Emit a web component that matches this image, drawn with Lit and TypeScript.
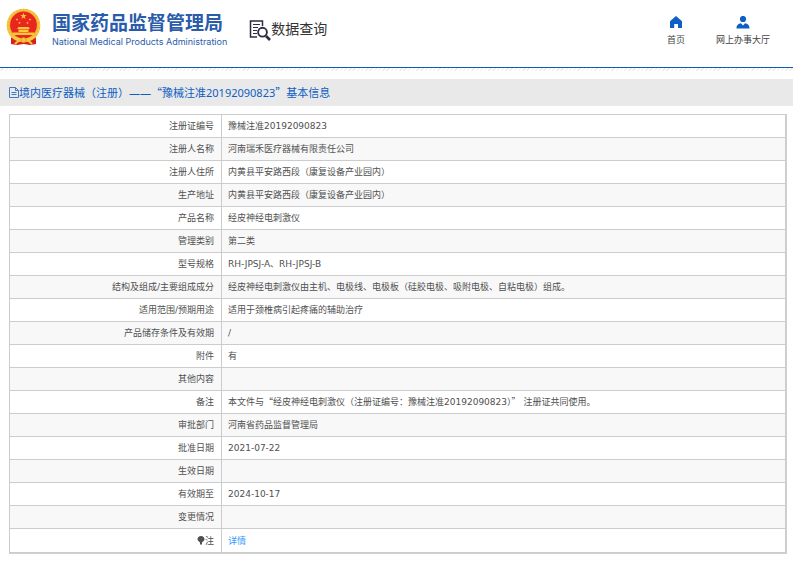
import { LitElement, html, css, svg, nothing } from "lit";
import { customElement } from "lit/decorators.js";

interface Row {
  label: string;
  value: string;
  link?: boolean;
}

const ROWS: Row[] = [
  { label: "注册证编号", value: "豫械注准20192090823" },
  { label: "注册人名称", value: "河南瑞禾医疗器械有限责任公司" },
  { label: "注册人住所", value: "内黄县平安路西段（康复设备产业园内）" },
  { label: "生产地址", value: "内黄县平安路西段（康复设备产业园内）" },
  { label: "产品名称", value: "经皮神经电刺激仪" },
  { label: "管理类别", value: "第二类" },
  { label: "型号规格", value: "RH-JPSJ-A、RH-JPSJ-B" },
  {
    label: "结构及组成/主要组成成分",
    value: "经皮神经电刺激仪由主机、电极线、电极板（硅胶电极、吸附电极、自粘电极）组成。",
  },
  { label: "适用范围/预期用途", value: "适用于颈椎病引起疼痛的辅助治疗" },
  { label: "产品储存条件及有效期", value: "/" },
  { label: "附件", value: "有" },
  { label: "其他内容", value: "" },
  {
    label: "备注",
    value: "本文件与“经皮神经电刺激仪（注册证编号：豫械注准20192090823）” 注册证共同使用。",
  },
  { label: "审批部门", value: "河南省药品监督管理局" },
  { label: "批准日期", value: "2021-07-22" },
  { label: "生效日期", value: "" },
  { label: "有效期至", value: "2024-10-17" },
  { label: "变更情况", value: "" },
  { label: "注", value: "详情", link: true },
];

// Chinese quotation marks take the full-width glyphs of the CJK face.
const withQuotes = (text: string) =>
  text
    .split(/([“”])/)
    .map((part) => (/[“”]/.test(part) ? html`<span class="quote">${part}</span>` : part));

const star = (cx: number, cy: number, r: number) => {
  const pts = Array.from({ length: 10 }, (_, i) => {
    const a = (Math.PI / 5) * i - Math.PI / 2;
    const d = i % 2 ? r * 0.4 : r;
    return `${(cx + d * Math.cos(a)).toFixed(2)},${(cy + d * Math.sin(a)).toFixed(2)}`;
  }).join(" ");
  return svg`<polygon points=${pts} fill="#ffc83a"/>`;
};

@customElement("site-header")
export class SiteHeader extends LitElement {
  static styles = css`
    :host {
      display: block;
    }
    .bar {
      display: flex;
      align-items: flex-start;
      height: 67px;
      border-bottom: 1px solid #0b5cb5;
      padding: 0 23px 0 6px;
    }
    .hatch {
      height: 3px;
      background: repeating-linear-gradient(135deg, #fff 0 2px, #ececec 2px 3px);
    }
    .brand {
      display: flex;
      gap: 11px;
      padding-top: 8px;
      text-decoration: none;
      color: #2a5caa;
    }
    .emblem {
      width: 35px;
      height: 39px;
      flex: none;
    }
    .names {
      display: flex;
      flex-direction: column;
      white-space: nowrap;
    }
    .cn {
      font: 700 19px/28px "Noto Sans CJK SC", sans-serif;
    }
    .en {
      font: 400 9px/12px Inter, "Liberation Sans", sans-serif;
    }
    .section {
      display: flex;
      align-items: flex-start;
      margin: 0 0 0 22px;
      padding-top: 18px;
      font: 400 14px/20px "Noto Sans CJK SC", sans-serif;
      color: #333;
      white-space: nowrap;
    }
    .query {
      width: 22px;
      height: 24px;
      flex: none;
    }
    nav {
      display: flex;
      gap: 31px;
      margin-left: auto;
      padding-top: 16px;
    }
    .item {
      display: flex;
      flex-direction: column;
      align-items: center;
      gap: 4px;
      font: 400 9px/14px "Noto Sans", "Noto Sans CJK SC", sans-serif;
      color: #444;
      text-decoration: none;
      white-space: nowrap;
    }
    .item svg {
      width: 14px;
      height: 13px;
    }
  `;

  render() {
    return html`
      <header>
        <div class="bar">
          <a class="brand" href="#">
            <svg class="emblem" viewBox="0 0 35 39" aria-hidden="true">
              <path d="M5 26V36L11 37L17.500 36L24 37L30 36V26Z" fill="#d8201c" />
              <circle cx="17.5" cy="17.5" r="16.8" fill="#f2b92f" />
              <circle cx="17.5" cy="17.5" r="15.5" fill="none" stroke="#f8cf55" stroke-width="1.2" stroke-dasharray="2 1.5" />
              <circle cx="17.5" cy="17" r="13.4" fill="#e8251f" />
              ${star(17.5, 8.2, 3.4)}${star(11, 11.5, 1.4)}${star(13.5, 15, 1.4)}${star(21.5, 15, 1.4)}${star(24, 11.5, 1.4)}
              <path d="M12.500 19h10l1.500 2h-13zM12.500 21.500h10v2.500h-10zM7 24.500h21v2.500h-21z" fill="#ffc83a" />
              <path d="M5 28Q17.500 36 30 28M9 36Q17.500 27 26 36" fill="none" stroke="#f7c640" stroke-width="2.2" />
              <circle cx="17.5" cy="32" r="2.6" fill="#f7c640" stroke="#dd7a22" stroke-width=".6" />
            </svg>
            <span class="names">
              <span class="cn">国家药品监督管理局</span>
              <span class="en">National Medical Products Administration</span>
            </span>
          </a>
          <h1 class="section">
            <svg class="query" viewBox="0 0 22 24" fill="none" stroke="#2e2e42" aria-hidden="true">
              <path d="M13.500 8V3H1.500V19H8" stroke-width="1.5" />
              <path d="M4 6.500h7M4 9.500h5M4 12.500h4M4 15.500h4" stroke-width="1.2" />
              <circle cx="13.5" cy="14.2" r="4.4" stroke-width="1.9" />
              <path d="M17 18l4 4" stroke-width="2.6" />
            </svg>
            <span>数据查询</span>
          </h1>
          <nav>
            <a class="item" href="#">
              <svg viewBox="0 0 14 13" fill="#0d5fc4" aria-hidden="true">
                <path d="M7 0L13 5.200V12H9V8H5.200V12H1V5.200Z" />
              </svg>
              <span>首页</span>
            </a>
            <a class="item" href="#">
              <svg viewBox="0 0 14 13" fill="#0d5fc4" aria-hidden="true">
                <circle cx="7" cy="3" r="3.1" />
                <path d="M.5 12.500C.5 9 2.400 7.600 5 7.200L7 9.600 9 7.200C11.600 7.600 13.500 9 13.500 12.500Z" />
              </svg>
              <span>网上办事大厅</span>
            </a>
          </nav>
        </div>
        <div class="hatch"></div>
      </header>
    `;
  }
}

@customElement("app-root")
export class AppRoot extends LitElement {
  static styles = css`
    :host {
      display: block;
      background: #fff;
    }
    .title {
      display: flex;
      align-items: center;
      margin: 8px 0 0;
      padding: 0 9px;
      background: #e9e9e9;
      color: #0d5fc4;
      font: 400 11px/27px "Noto Sans", "Noto Sans CJK SC", sans-serif;
    }
    .quote {
      font-family: "Noto Sans CJK SC", sans-serif;
      line-height: 1;
    }
    .doc {
      width: 10px;
      height: 11px;
      flex: none;
    }
    .wrap {
      margin: 8px 6px 7px 9px;
      border: solid #d0d0d0;
      border-width: 0 1px 1px 0;
    }
    table {
      width: 100%;
      border-collapse: collapse;
      table-layout: fixed;
      font: 400 9px/14px "DejaVu Sans", "Noto Sans CJK SC", sans-serif;
      color: #505050;
    }
    .label-col {
      width: 212px;
    }
    th,
    td {
      height: 23px;
      box-sizing: border-box;
      border: 1px solid #ccc;
      padding: 0 7px 0 6px;
      font-weight: 400;
      text-align: left;
    }
    th {
      text-align: right;
    }
    tr:nth-child(even) {
      background: #f8f8f8;
    }
    tr:last-child > * {
      height: 24px;
    }
    .pin {
      width: 8px;
      height: 9px;
      vertical-align: -1px;
    }
    .link {
      color: #3399ff;
      text-decoration: none;
    }
  `;

  render() {
    return html`
      <site-header></site-header>
      <main>
        <h2 class="title">
          <svg class="doc" viewBox="0 0 10 11" fill="none" stroke="#3f78c9" aria-hidden="true">
            <path d="M.5 .5H6.500L9.500 3.500V10.500H.5ZM6.500 .5V3.500H9.500M2.500 5.500H7.500M2.500 7.500H7.500" />
          </svg>
          <span>${withQuotes("境内医疗器械（注册）——“豫械注准20192090823”基本信息")}</span>
        </h2>
        <div class="wrap">
          <table>
            <colgroup>
              <col class="label-col" />
              <col />
            </colgroup>
            <tbody>
              ${ROWS.map(
                (r) => html`<tr>
                  <th scope="row">${r.link
                      ? html`<svg class="pin" viewBox="0 0 8 9" fill="#505050" aria-hidden="true"><path d="M4 0C6.200 0 7.500 1.500 7.500 3.200 7.500 4.800 6 5.500 5 6.500V8.500H3V6.500C2 5.500 .5 4.800 .5 3.200 .5 1.500 1.800 0 4 0Z" /></svg>`
                      : nothing}${r.label}</th>
                  <td>${r.link ? html`<a class="link" href="#">${r.value}</a>` : withQuotes(r.value)}</td>
                </tr>`
              )}
            </tbody>
          </table>
        </div>
      </main>
    `;
  }
}
